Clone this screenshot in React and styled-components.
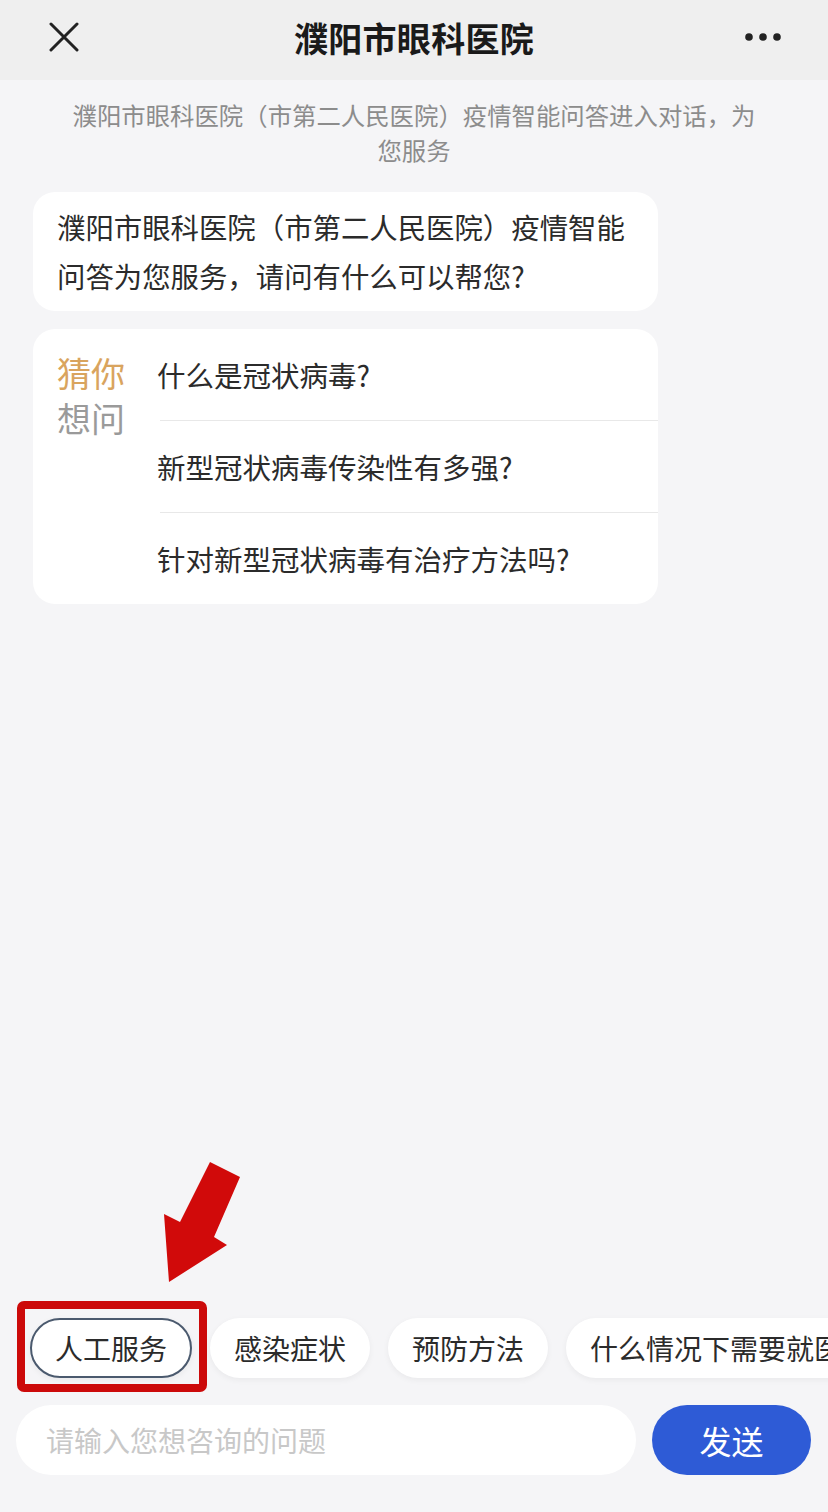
import styled, { createGlobalStyle } from 'styled-components';

const GlobalStyle = createGlobalStyle`
	html, body {
		margin: 0;
		padding: 0;
		background: #f5f5f7;
	}
	body {
		font-family: "Noto Sans CJK SC", "Noto Sans", sans-serif;
		-webkit-font-smoothing: antialiased;
	}
`;

const questions = [
	'什么是冠状病毒?',
	'新型冠状病毒传染性有多强?',
	'针对新型冠状病毒有治疗方法吗?',
];

const chips = ['人工服务', '感染症状', '预防方法', '什么情况下需要就医'];

export default function App() {
	return (
		<StyledPage>
			<GlobalStyle />
			<StyledHeader>
				<StyledIconButton aria-label="关闭">
					<svg width="30" height="30" viewBox="0 0 30 30">
						<path d="M2 2 L28 28 M28 2 L2 28" stroke="#222" strokeWidth="3" strokeLinecap="round" fill="none" />
					</svg>
				</StyledIconButton>
				<StyledTitle>濮阳市眼科医院</StyledTitle>
				<StyledIconButton aria-label="更多">
					<svg width="40" height="10" viewBox="0 0 40 10">
						<circle cx="5" cy="5" r="3.8" fill="#222" />
						<circle cx="19" cy="5" r="3.8" fill="#222" />
						<circle cx="33" cy="5" r="3.8" fill="#222" />
					</svg>
				</StyledIconButton>
			</StyledHeader>

			<StyledMain>
				<StyledNotice>濮阳市眼科医院（市第二人民医院）疫情智能问答进入对话，为您服务</StyledNotice>

				<StyledBubble>
					<StyledBubbleText>濮阳市眼科医院（市第二人民医院）疫情智能问答为您服务，请问有什么可以帮您?</StyledBubbleText>
				</StyledBubble>

				<StyledGuessCard>
					<StyledGuessLabel>
						<StyledGuessWord $accent>猜你</StyledGuessWord>
						<StyledGuessWord>想问</StyledGuessWord>
					</StyledGuessLabel>
					<StyledQuestionList>
						{questions.map((q, i) => (
							<StyledQuestion key={q} $first={i === 0}>{q}</StyledQuestion>
						))}
					</StyledQuestionList>
				</StyledGuessCard>
			</StyledMain>

			<StyledFooter>
				<StyledChipRow>
					{chips.map((c, i) => (
						<StyledChip key={c} $active={i === 0}>
							{c}
							{i === 0 && (
								<>
									<StyledHighlight />
									<StyledArrow width="80" height="124" viewBox="0 0 80 124">
										<polygon points="46,0 76,15 50,75 63,83 5,120 0,52 16,60" fill="#d10a0a" />
									</StyledArrow>
								</>
							)}
						</StyledChip>
					))}
				</StyledChipRow>
				<StyledInputRow>
					<StyledInput placeholder="请输入您想咨询的问题" />
					<StyledSend>发送</StyledSend>
				</StyledInputRow>
			</StyledFooter>
		</StyledPage>
	);
}

const StyledPage = styled.div`
	display: flex;
	flex-direction: column;
	min-height: 1512px;
	background: #f5f5f7;
	overflow: hidden;
`;

const StyledHeader = styled.header`
	display: flex;
	align-items: center;
	justify-content: space-between;
	height: 80px;
	padding: 0 42px 6px 42px;
	box-sizing: border-box;
	background: #efefef;
`;

const StyledIconButton = styled.button`
	display: flex;
	align-items: center;
	justify-content: center;
	width: 44px;
	height: 44px;
	padding: 0;
	border: none;
	background: transparent;
`;

const StyledTitle = styled.h1`
	margin: 0;
	font-size: 34px;
	font-weight: 700;
	color: #1a1a1a;
	letter-spacing: 0.3px;
`;

const StyledMain = styled.main`
	flex: 1;
	display: flex;
	flex-direction: column;
	align-items: flex-start;
	padding: 17px 0 0 33px;
`;

const StyledNotice = styled.p`
	align-self: center;
	width: 700px;
	margin: 0 0 25px -33px;
	font-size: 24.4px;
	line-height: 35px;
	text-align: center;
	color: #8c8c8c;
`;

const StyledBubble = styled.div`
	width: 625px;
	box-sizing: border-box;
	padding: 10px 28px 11px 24px;
	background: #fff;
	border-radius: 22px;
`;

const StyledBubbleText = styled.p`
	margin: 0;
	font-size: 28.4px;
	line-height: 49px;
	color: #2b2b2b;
`;

const StyledGuessCard = styled.div`
	display: flex;
	width: 625px;
	margin-top: 18px;
	background: #fff;
	border-radius: 22px;
	overflow: hidden;
`;

const StyledGuessLabel = styled.div`
	display: flex;
	flex-direction: column;
	width: 124px;
	flex-shrink: 0;
	box-sizing: border-box;
	padding: 21px 0 0 24px;
`;

const StyledGuessWord = styled.span`
	font-size: 34px;
	line-height: 45px;
	color: ${({ $accent }) => ($accent ? '#d9a45e' : '#9a9a9a')};
`;

const StyledQuestionList = styled.div`
	flex: 1;
	display: flex;
	flex-direction: column;
`;

const StyledQuestion = styled.div`
	height: 91px;
	display: flex;
	align-items: center;
	margin-left: 3px;
	font-size: 28.5px;
	color: #2b2b2b;
	border-top: ${({ $first }) => ($first ? 'none' : '1px solid #e8e8e8')};
	text-indent: -3px;
`;

const StyledFooter = styled.footer`
	display: flex;
	flex-direction: column;
	gap: 27px;
	padding-bottom: 37px;
`;

const StyledChipRow = styled.div`
	display: flex;
	gap: 18px;
	padding-left: 30px;
	white-space: nowrap;
`;

const StyledChip = styled.button`
	position: relative;
	flex-shrink: 0;
	height: 60px;
	padding: 0 ${({ $active }) => ($active ? '23px' : '24px')};
	border: ${({ $active }) => ($active ? '2px solid #4b5a6e' : 'none')};
	border-radius: 30px;
	background: #fff;
	box-shadow: 0 2px 6px rgba(0, 0, 0, 0.05);
	font-family: "Noto Sans CJK SC", sans-serif;
	font-size: 28px;
	color: #2b2b2b;
`;

const StyledHighlight = styled.span`
	position: absolute;
	top: -19px;
	left: -15px;
	right: -17px;
	bottom: -16px;
	border: 8px solid #cc0a0a;
	border-radius: 7px;
	pointer-events: none;
`;

const StyledArrow = styled.svg`
	position: absolute;
	left: 132px;
	top: -158px;
	pointer-events: none;
`;

const StyledInputRow = styled.div`
	display: flex;
	gap: 16px;
	padding: 0 17px 0 16px;
`;

const StyledInput = styled.input`
	flex: 1;
	height: 70px;
	box-sizing: border-box;
	padding: 0 30px;
	border: none;
	border-radius: 35px;
	background: #fff;
	font-family: "Noto Sans CJK SC", sans-serif;
	font-size: 28px;
	color: #333;
	outline: none;

	&::placeholder {
		color: #c8c8c8;
	}
`;

const StyledSend = styled.button`
	width: 159px;
	height: 70px;
	border: none;
	border-radius: 35px;
	background: #2e5bd6;
	font-family: "Noto Sans CJK SC", sans-serif;
	font-size: 32px;
	color: #fff;
`;
